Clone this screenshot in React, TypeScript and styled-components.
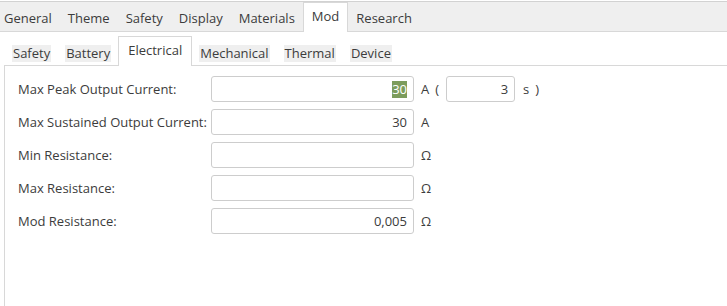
import styled, { createGlobalStyle } from 'styled-components'

const GlobalStyle = createGlobalStyle`
  body {
    margin: 0;
    background: #ffffff;
    font-family: 'Open Sans', 'DejaVu Sans', sans-serif;
    font-size: 13px;
    color: #3c3c3c;
  }
`

const mainTabs = ['General', 'Theme', 'Safety', 'Display', 'Materials', 'Mod', 'Research']
const subTabs = ['Safety', 'Battery', 'Electrical', 'Mechanical', 'Thermal', 'Device']

interface Field {
  label: string
  value: string
  unit: string
  selected?: boolean
  duration?: string
}

const fields: Field[] = [
  { label: 'Max Peak Output Current:', value: '30', unit: 'A', selected: true, duration: '3' },
  { label: 'Max Sustained Output Current:', value: '30', unit: 'A' },
  { label: 'Min Resistance:', value: '', unit: 'Ω' },
  { label: 'Max Resistance:', value: '', unit: 'Ω' },
  { label: 'Mod Resistance:', value: '0,005', unit: 'Ω' },
]

export default function App() {
  return (
    <Page>
      <GlobalStyle />
      <TopEdge />
      <TabBar>
        {mainTabs.map(t => (
          <Tab key={t} $active={t === 'Mod'}>
            {t}
          </Tab>
        ))}
      </TabBar>
      <Body>
        <SubTabBar>
          {subTabs.map(t =>
            t === 'Electrical' ? (
              <ActiveSubTab key={t}>{t}</ActiveSubTab>
            ) : (
              <SubTab key={t}>
                <SubTabLabel>{t}</SubTabLabel>
              </SubTab>
            ),
          )}
        </SubTabBar>
        <Panel>
          <Form>
            {fields.map(f => (
              <Row key={f.label}>
                <Label>{f.label}</Label>
                <Input>
                  {f.selected ? <Selection>{f.value}</Selection> : f.value}
                </Input>
                <Units>
                  <Unit>{f.unit}</Unit>
                  {f.duration && (
                    <>
                      <Unit>(</Unit>
                      <SmallInput>{f.duration}</SmallInput>
                      <Unit>s</Unit>
                      <Unit>)</Unit>
                    </>
                  )}
                </Units>
              </Row>
            ))}
          </Form>
        </Panel>
      </Body>
    </Page>
  )
}

const Page = styled.div`
  display: flex;
  flex-direction: column;
  height: 306px;
  overflow: hidden;
`

const TopEdge = styled.div`
  height: 1px;
  background: #ffffff;
  border-bottom: 1px solid #d2d2d2;
`

const TabBar = styled.div`
  display: flex;
  align-items: flex-end;
  height: 29px;
  background: #efefef;
  border-bottom: 1px solid #d8d8d8;
`

const Tab = styled.div<{ $active?: boolean }>`
  display: flex;
  align-items: center;
  height: 26px;
  padding: ${p => (p.$active ? '0 8px 3px' : '0 7px 0')};
  margin-bottom: ${p => (p.$active ? '-1px' : '0')};
  background: ${p => (p.$active ? '#ffffff' : 'transparent')};
  border: 1px solid ${p => (p.$active ? '#d8d8d8' : 'transparent')};
  border-bottom: none;
  color: #3c3c3c;
  white-space: nowrap;

  &:first-child {
    padding-left: 3px;
  }
`

const Body = styled.div`
  flex: 1;
  display: flex;
  flex-direction: column;
  padding: 6px 0 0 4px;
`

const SubTabBar = styled.div`
  display: flex;
  align-items: flex-end;
  height: 27px;
  padding-left: 1px;
`

const SubTab = styled.div`
  display: flex;
  align-items: center;
  height: 22px;
  padding: 0 7px 1px;
`

const SubTabLabel = styled.span`
  background: #efefef;
  padding: 0 1px;
  line-height: 17px;
`

const ActiveSubTab = styled.div`
  display: flex;
  align-items: center;
  height: 26px;
  padding: 0 9px 3px;
  margin-bottom: -1px;
  background: #ffffff;
  border: 1px solid #d8d8d8;
  border-bottom: none;
  position: relative;
  z-index: 1;
`

const Panel = styled.div`
  flex: 1;
  border-top: 1px solid #d8d8d8;
  border-left: 1px solid #d8d8d8;
  padding: 10px 0 0 13px;
`

const Form = styled.div`
  display: flex;
  flex-direction: column;
  gap: 7px;
`

const Row = styled.div`
  display: flex;
  align-items: center;
  height: 26px;
`

const Label = styled.div`
  width: 193px;
  white-space: nowrap;
`

const Input = styled.div`
  box-sizing: border-box;
  display: flex;
  align-items: center;
  justify-content: flex-end;
  width: 203px;
  height: 26px;
  padding-right: 6px;
  border: 1px solid #cdcdcd;
  border-radius: 3px;
  background: #ffffff;
`

const SmallInput = styled(Input)`
  width: 69px;
  margin: 0 2px 0 1px;
`

const Selection = styled.span`
  background: #7c9c5c;
  color: #ffffff;
  line-height: 17px;
`

const Units = styled.div`
  display: flex;
  align-items: center;
  gap: 6px;
  margin-left: 7px;
`

const Unit = styled.span`
  white-space: nowrap;
`
